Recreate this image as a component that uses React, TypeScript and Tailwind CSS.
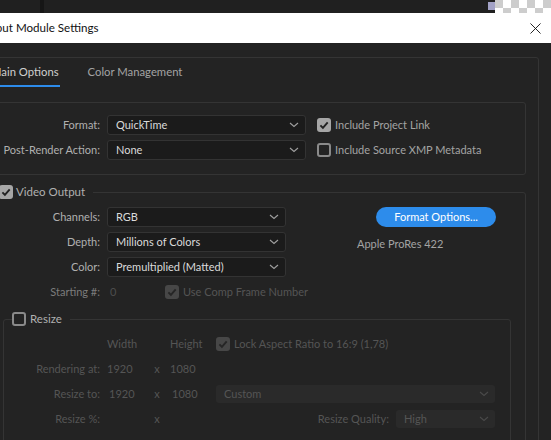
import React from 'react';

const font = "font-['Segoe_UI','Lato',sans-serif]";

function Check({ on, dim }: { on?: boolean; dim?: boolean }) {
  if (on) {
    return (
      <span
        className={`flex h-[14px] w-[14px] shrink-0 items-center justify-center rounded-[3px] ${
          dim ? 'bg-[#474747]' : 'bg-[#a6a6a6]'
        }`}
      >
        <svg viewBox="0 0 14 14" className="h-[14px] w-[14px]">
          <path
            d="M3.4 7.3 L5.9 9.8 L10.7 4.3"
            fill="none"
            stroke={dim ? '#262626' : '#222222'}
            strokeWidth="1.9"
          />
        </svg>
      </span>
    );
  }
  return <span className="block h-[14px] w-[14px] shrink-0 rounded-[3px] border-2 border-[#8a8a8a]" />;
}

function Chevron({ dim }: { dim?: boolean }) {
  return (
    <svg viewBox="0 0 10 6" className="h-[6px] w-[10px]">
      <path d="M1 1 L5 4.5 L9 1" fill="none" stroke={dim ? '#4a4a4a' : '#a0a0a0'} strokeWidth="1.1" />
    </svg>
  );
}

function Select({ value, className, dim }: { value: string; className: string; dim?: boolean }) {
  return (
    <div
      className={`flex shrink-0 items-center justify-between rounded-[3px] pl-[8px] pr-[6px] ${className} ${
        dim ? 'bg-[#2a2a2a] text-[#555555]' : 'border border-[#333333] bg-[#1b1b1b] text-[#dadada]'
      }`}
    >
      <span>{value}</span>
      <Chevron dim={dim} />
    </div>
  );
}

function Row({ label, children }: { label: string; children: React.ReactNode }) {
  return (
    <div className="flex h-[20px] items-center whitespace-nowrap">
      <span className="w-[107px] shrink-0 text-right text-[#b0b0b0]">{label}</span>
      {children}
    </div>
  );
}

export default function App() {
  return (
    <div className={`h-[440px] w-[551px] overflow-hidden whitespace-nowrap bg-[#232323] text-[11px] leading-[16px] ${font}`}>
      {/* app behind the dialog */}
      <div className="flex h-[13px] bg-[#202020]">
        <div className="ml-[40px] w-[4px] bg-[#161616]" />
        <div className="flex-1" />
        <div className="mt-[2px] h-[8px] w-[7px] bg-[#a3a2c6]" />
        <div className="h-[13px] w-[56px] bg-[repeating-conic-gradient(#ffffff_0_25%,#cdcdcd_0_50%)] bg-[length:16px_16px]" />
      </div>

      {/* title bar */}
      <div className="flex h-[30px] items-center justify-between overflow-hidden bg-white">
        <span className="ml-[-24px] text-[11.6px] text-[#111111]">Output Module Settings</span>
        <svg viewBox="0 0 12 12" className="mr-[10px] h-[11px] w-[11px]">
          <path d="M0.5 0.5 L11.5 11.5 M11.5 0.5 L0.5 11.5" stroke="#111111" strokeWidth="1" />
        </svg>
      </div>

      {/* dialog body */}
      <div className="ml-[-20px] mt-[14px] h-[420px] w-[559px] rounded-[3px] border border-[#343434]">
        <div className="flex gap-[27px] pl-[9px] pt-[6px] text-[11.3px]">
          <div className="border-b-2 border-[#2d8ceb] px-[1px] pb-[5px] text-[#cfcfcf]">Main Options</div>
          <div className="px-[1px] pb-[5px] text-[#a3a3a3]">Color Management</div>
        </div>

        {/* top section */}
        <div className="ml-[11px] mr-[12px] mt-[15px] flex flex-col gap-[5px] rounded-[3px] border border-[#343434] pb-[14px] pt-[12px]">
          <Row label="Format:">
            <Select value="QuickTime" className="ml-[7px] h-[20px] w-[199px]" />
            <span className="ml-[11px] shrink-0">
              <Check on />
            </span>
            <span className="ml-[4px] text-[#a3a3a3]">Include Project Link</span>
          </Row>
          <Row label="Post-Render Action:">
            <Select value="None" className="ml-[7px] h-[20px] w-[199px]" />
            <span className="ml-[11px] shrink-0">
              <Check />
            </span>
            <span className="ml-[4px] text-[#a3a3a3]">Include Source XMP Metadata</span>
          </Row>
        </div>

        {/* video output */}
        <fieldset className="ml-[11px] mr-[12px] mt-[10px] rounded-[3px] border border-[#343434]">
          <legend className="ml-[6px] flex h-[14px] items-center pr-[8px]">
            <Check on />
            <span className="ml-[3px] text-[11.5px] text-[#b0b0b0]">Video Output</span>
          </legend>

          <div className="flex pt-[8px]">
            <div className="flex flex-col gap-[5px]">
              <Row label="Channels:">
                <Select value="RGB" className="ml-[7px] h-[20px] w-[179px]" />
              </Row>
              <Row label="Depth:">
                <Select value="Millions of Colors" className="ml-[7px] h-[20px] w-[179px]" />
              </Row>
              <Row label="Color:">
                <Select value="Premultiplied (Matted)" className="ml-[7px] h-[20px] w-[179px]" />
              </Row>
            </div>
            <div className="ml-[71px] flex flex-col">
              <button className="ml-[19px] flex h-[20px] w-[120px] items-center justify-center rounded-full bg-[#2d8ceb] text-white">
                Format Options...
              </button>
              <span className="mt-[9px] text-[#a3a3a3]">Apple ProRes 422</span>
            </div>
          </div>

          <div className="mt-[8px] flex h-[14px] items-center">
            <span className="w-[107px] text-right text-[#7c7c7c]">Starting #:</span>
            <span className="ml-[10px] w-[55px] text-[#4e4e4e]">0</span>
            <Check on dim />
            <span className="ml-[4px] text-[#555555]">Use Comp Frame Number</span>
          </div>

          {/* resize */}
          <fieldset className="ml-[10px] mr-[14px] mt-[13px] h-[140px] rounded-[3px] border border-[#343434]">
            <legend className="ml-[8px] flex h-[14px] items-center pr-[8px]">
              <Check />
              <span className="ml-[4px] text-[11.5px] text-[#b0b0b0]">Resize</span>
            </legend>

            <div className="text-[#555555]">
              <div className="mt-[11px] flex h-[14px] items-center">
                <span className="w-[96px]" />
                <span className="ml-[7px] w-[44px]">Width</span>
                <span className="w-[12px]" />
                <span className="ml-[7px] w-[46px]">Height</span>
                <Check on dim />
                <span className="ml-[4px]">Lock Aspect Ratio to 16:9 (1,78)</span>
              </div>

              <div className="mt-[8px] flex h-[20px] items-center">
                <span className="w-[96px] text-right">Rendering at:</span>
                <span className="ml-[7px] w-[44px]">1920</span>
                <span className="w-[12px] text-center">x</span>
                <span className="ml-[7px] w-[46px]">1080</span>
              </div>

              <div className="mt-[5px] flex h-[20px] items-center">
                <span className="w-[96px] text-right">Resize to:</span>
                <span className="ml-[7px] w-[44px] pl-[2px]">1920</span>
                <span className="w-[12px] text-center">x</span>
                <span className="ml-[7px] w-[46px] pl-[2px]">1080</span>
                <Select value="Custom" dim className="h-[18px] w-[279px]" />
              </div>

              <div className="mt-[5px] flex h-[20px] items-center pr-[15px]">
                <span className="w-[96px] text-right">Resize %:</span>
                <span className="ml-[7px] w-[44px]" />
                <span className="w-[12px] text-center">x</span>
                <span className="flex-1" />
                <span className="mr-[7px]">Resize Quality:</span>
                <Select value="High" dim className="h-[18px] w-[99px]" />
              </div>
            </div>
          </fieldset>
        </fieldset>
      </div>
    </div>
  );
}
